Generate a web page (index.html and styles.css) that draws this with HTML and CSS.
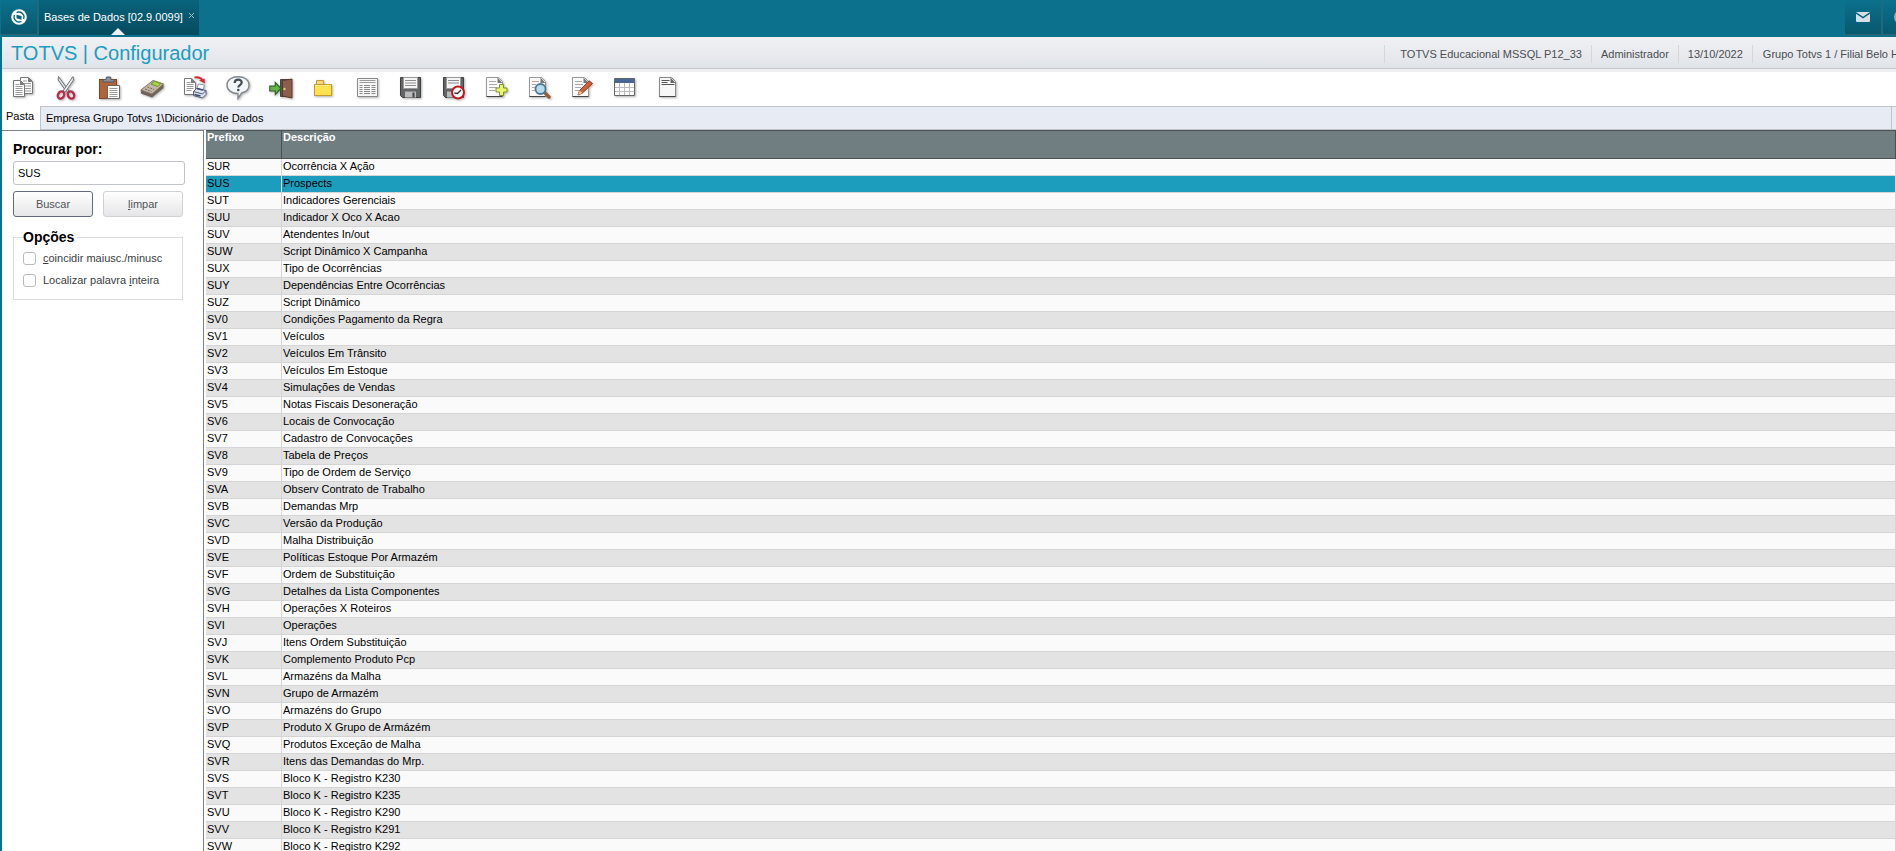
FILE: index.html
```html
<!DOCTYPE html>
<html lang="pt-BR">
<head>
  <meta charset="UTF-8">
  <title>TOTVS | Configurador</title>
  <meta name="viewport" content="width=device-width, initial-scale=1.0">
  <link rel="stylesheet" href="styles.css">
</head>
<body>

  <nav class="topbar">
    <button class="top-btn" aria-label="Menu">
      <svg width="18" height="18" viewBox="0 0 18 18"><circle cx="9" cy="9" r="7.800" fill="#fff"/><path d="M6.500 6.800 11.500 8v3.800l-5-1.600z" fill="#09647c"/><path d="M6.500 4.500q5-2 7.500 3.500l-.3 3M11.500 13.500q-5 2-7.500-3.500l.3-3" fill="none" stroke="#09647c" stroke-width="1.300"/></svg>
    </button>
    <div class="top-tab">
      <span>Bases de Dados [02.9.0099]</span>
      <button class="tab-close" aria-label="Fechar"><svg width="7" height="7" viewBox="0 0 7 7"><path d="M1 1 6 6M6 1 1 6" stroke="#9fc0ca"/></svg></button>
    </div>
    <div class="top-right">
      <button class="top-btn" aria-label="Mensagens">
        <svg width="14" height="10" viewBox="0 0 14 10"><rect width="14" height="10" rx="1" fill="#d5e0e6"/><path d="M0 .8 7 5.600 14 .8" fill="none" stroke="#066179" stroke-width="1.400"/></svg>
      </button>
      <button class="top-btn cut" aria-label="Ajuda">
        <svg width="14" height="14" viewBox="0 0 14 14"><circle cx="7" cy="7" r="7" fill="#8fb2bf"/></svg>
      </button>
    </div>
  </nav>

  <div class="app">
    <header class="app-header">
      <h1>TOTVS | Configurador</h1>
      <ul class="session">
        <li>TOTVS Educacional MSSQL P12_33</li>
        <li>Administrador</li>
        <li>13/10/2022</li>
        <li class="branch">Grupo Totvs 1 / Filial Belo H</li>
      </ul>
    </header>

    <div class="toolbar">
      <button aria-label="Copiar">
        <svg viewBox="0 0 24 24"><path d="M9.500 1.500h8l4 4v12h-12z" fill="#fff" stroke="#777"/><path d="M17 1.500v4.500h4.500z" fill="#777"/><path d="M12 5h4M12 7.500h8M12 10h8M12 12.500h8M12 15h8" stroke="#999"/><path d="M2.500 4.500h7l4 4v12h-11z" fill="#fff" stroke="#777"/><path d="M9 4.500v4.500h4.500z" fill="#777"/><path d="M4.500 8.500h4M4.500 10.500h7M4.500 12.500h7M4.500 14.500h7M4.500 16.500h7M4.500 18.500h7" stroke="#999"/></svg>
      </button>
      <button aria-label="Recortar">
        <svg viewBox="0 0 24 24"><path d="M4.500.5 15 15l-2 1.500L4.200 4z" fill="#d8dde0" stroke="#707478"/><path d="M19 .5 9 15l2 1.500 8.500-12.500z" fill="#eceff0" stroke="#707478"/><ellipse cx="7" cy="19" rx="3" ry="3.800" fill="none" stroke="#b5304a" stroke-width="2.400" transform="rotate(28 7 19)"/><ellipse cx="17" cy="19" rx="3" ry="3.800" fill="none" stroke="#b5304a" stroke-width="2.400" transform="rotate(-28 17 19)"/></svg>
      </button>
      <button aria-label="Colar">
        <svg viewBox="0 0 24 24"><rect x="2.500" y="3.500" width="17" height="19" fill="#b16437" stroke="#87451f"/><path d="M6 6V3.500h3L9.500 1h4l.5 2.500h3V6z" fill="#8c9096" stroke="#55595e"/><path d="M10.500 9.500h12v13h-12z" fill="#fff" stroke="#666"/><path d="M12.500 12.500h8M12.500 14.500h8M12.500 16.500h8M12.500 18.500h8M12.500 20.500h8" stroke="#999"/></svg>
      </button>
      <button aria-label="Calculadora">
        <svg viewBox="0 0 24 24"><path d="M.8 14v3.500L12 21.500 23.500 12V8z" fill="#6f6259"/><path d="M.8 14 13 4.500 23.500 8 12 18z" fill="#c4b4a4" stroke="#85776b"/><path d="M11 8 14.500 5.300l6.500 2.200-3.500 3z" fill="#a5d83c" stroke="#6f943a"/><path d="m5 13 6.500 2.500M7.500 11l6.500 2.500" stroke="#75675c" stroke-dasharray="2 1"/></svg>
      </button>
      <button aria-label="Imprimir">
        <svg viewBox="0 0 24 24"><path d="M1.500 2.500h7l4 4v12h-11z" fill="#fff" stroke="#777"/><path d="M8 2.500v4.500h4.500z" fill="#777"/><path d="M3.500 6.500h4M3.500 8.500h7M3.500 10.500h7M3.500 12.500h7M3.500 14.500h5" stroke="#999"/><path d="M11.500 1.500q6-1 8 3" fill="none" stroke="#d62b36" stroke-width="2"/><path d="m16 4.500 5.500-2 .5 5z" fill="#d62b36"/><path d="m13.500 13 2-5 6 1-1.500 5z" fill="#fff" stroke="#8c96ad"/><path d="m10.500 15.500 3-3 9.500 2v4l-3.500 3.500-9-2.500z" fill="#dce3f4" stroke="#555d70"/><path d="m10.500 15.500 9 2.500 3.500-3.500" fill="none" stroke="#555d70"/><path d="m14 12.500 6 1.500M11.500 18.500l6 1.500" stroke="#3c4a79" stroke-width="1.500"/></svg>
      </button>
      <button aria-label="Ajuda">
        <svg viewBox="0 0 24 24"><path d="M12 .8C18.500.8 23 4 23 9c0 4-3 7-7.500 8L12 22.500v-5C5.500 17.500 1 14 1 9S5.500.8 12 .8z" fill="#f3f6f9" stroke="#808992" stroke-width="1.400"/><path d="M8.700 7c0-4.300 7-4.300 7-.6 0 2.600-3.400 2.600-3.400 5" fill="none" stroke="#454b52" stroke-width="2.200"/><circle cx="12.300" cy="14" r="1.300" fill="#454b52"/></svg>
      </button>
      <button aria-label="Sair">
        <svg viewBox="0 0 24 24"><path d="M11.500 3.500h11v17h-11z" fill="#555" stroke="#444"/><path d="m13.500 4.500 9.500-1.500v19l-9.500-2z" fill="#8c5d4b" stroke="#5c392c"/><circle cx="15.500" cy="13" r="1.200" fill="#e3c48a"/><path d="M.8 10h5.500V6.500L12 12.500l-5.700 6V15H.8z" fill="#65b347" stroke="#2d6424" stroke-width="1.200"/></svg>
      </button>
      <button aria-label="Abrir">
        <svg viewBox="0 0 24 24"><path d="M2.500 19.500v-11h2v-4h7v4h8v11z" fill="#f6d37a" stroke="#c99b38"/><path d="M2.500 8.500h17v11h-17z" fill="#ffe24f" stroke="#c99b26"/><path d="M3.500 9.500h15" stroke="#fff3a0"/></svg>
      </button>
      <button aria-label="Lista">
        <svg viewBox="0 0 24 24"><path d="M2.500 2.500h20v18h-20z" fill="#f6f6f6" stroke="#888"/><path d="M4.500 4.500h16M4.500 6.500h16" stroke="#999"/><path d="M4.500 9.500h3M9 9.500h6M16.500 9.500h4M4.500 11.500h3M9 11.500h6M16.500 11.500h4M4.500 13.500h3M9 13.500h6M16.500 13.500h4M4.500 15.500h3M9 15.500h6M16.500 15.500h4M4.500 17.500h3M9 17.500h6M16.500 17.500h4" stroke="#888"/></svg>
      </button>
      <button aria-label="Salvar">
        <svg viewBox="0 0 24 24"><path d="M2.500 1.500h20v20h-18l-2-2z" fill="#626466" stroke="#3e4042"/><path d="M5.500 1.500h14v11h-14z" fill="#f5f5f5" stroke="#999"/><path d="M7 4.500h11M7 7h11M7 9.500h11" stroke="#8d8d8d"/><path d="M7 15.500h11v6H7z" fill="#b9bbbd"/><path d="M14.500 16.500h2v5h-2z" fill="#444"/></svg>
      </button>
      <button aria-label="Agendar">
        <svg viewBox="0 0 24 24"><path d="M2.500 1.500h20v20h-18l-2-2z" fill="#626466" stroke="#3e4042"/><path d="M5.500 1.500h14v11h-14z" fill="#f5f5f5" stroke="#999"/><path d="M7 4.500h11M7 7h11" stroke="#8d8d8d"/><path d="M6 15.500h6v6H6z" fill="#b9bbbd"/><circle cx="17" cy="16.500" r="6" fill="#fff" stroke="#c4171c" stroke-width="2"/><path d="m13.500 17 3 .5 3.500-3.500" fill="none" stroke="#333" stroke-width="1.400"/></svg>
      </button>
      <button aria-label="Incluir">
        <svg viewBox="0 0 24 24"><path d="M2.500 1.500h12l4 4v15h-16z" fill="#fafafa" stroke="#999"/><path d="M2.500 20.500h16" stroke="#444"/><path d="M13.500 1.500v5.500h5z" fill="#777"/><path d="M5 5.500h7M5 8.500h8M5 11.500h8M5 14.500h6" stroke="#aaa"/><path d="M15.500 8.500h4v3.500h3.500v4h-3.500v3.500h-4v-3.500H12v-4h3.500z" fill="#e9f86b" stroke="#7d9028"/></svg>
      </button>
      <button aria-label="Visualizar">
        <svg viewBox="0 0 24 24"><path d="M2.500 1.500h12l4 4v15h-16z" fill="#fafafa" stroke="#999"/><path d="M2.500 20.500h16" stroke="#444"/><path d="M13.500 1.500v5.500h5z" fill="#777"/><path d="M5 5.500h7M5 8.500h4M5 11.500h3M5 14.500h4" stroke="#aaa"/><path d="m17 16 5 5" stroke="#94603c" stroke-width="3.500" stroke-linecap="round"/><circle cx="13.500" cy="13" r="5" fill="#b7dcef" stroke="#4d7894" stroke-width="1.800"/></svg>
      </button>
      <button aria-label="Alterar">
        <svg viewBox="0 0 24 24"><path d="M2.500 1.500h12l4 4v15h-16z" fill="#fafafa" stroke="#999"/><path d="M2.500 20.500h16" stroke="#444"/><path d="M13.500 1.500v5.500h5z" fill="#777"/><path d="M5 5.500h7M5 8.500h8M5 11.500h6M5 14.500h4" stroke="#aaa"/><path d="m8 19 1.500-4.500L19 4.800l3.500 2.700-10 9.500z" fill="#cf6236" stroke="#8c3b22"/><path d="m8 19 1.500-4.500 3 2.500z" fill="#e9c893"/></svg>
      </button>
      <button aria-label="Tabela">
        <svg viewBox="0 0 24 24"><path d="M1.500 2.500h20v17h-20z" fill="#fff" stroke="#666"/><path d="M2 3h19v4H2z" fill="#486793"/><path d="M2 11.500h19M2 15.500h19M6.500 7v12M11.500 7v12M16.500 7v12" stroke="#bbb"/></svg>
      </button>
      <button aria-label="Documento">
        <svg viewBox="0 0 24 24"><path d="M3.500 1.500h12l4 4v15h-16z" fill="#f7f7f7" stroke="#888"/><path d="M3.500 20.500h16" stroke="#444"/><path d="M14.500 1.500v5.500h5z" fill="#666"/><path d="M5.500 4.500h8M5.500 6.500h6M5.500 8.500h13" stroke="#555"/></svg>
      </button>
    </div>

    <div class="folder-bar">
      <div class="folder-tab">Pasta</div>
      <div class="folder-path">Empresa Grupo Totvs 1\Dicionário de Dados</div>
      <div class="folder-end"></div>
    </div>

    <div class="content">
      <form class="search-panel">
        <label class="search-title" for="search">Procurar por:</label>
        <input type="text" id="search" class="search-input" value="SUS">
        <div class="search-actions">
          <button type="button" class="primary">Buscar</button>
          <button type="button"><u>l</u>impar</button>
        </div>
        <fieldset>
          <legend>Opções</legend>
          <div class="option">
            <input type="checkbox" id="matchCase">
            <label for="matchCase"><u>c</u>oincidir maiusc./minusc</label>
          </div>
          <div class="option">
            <input type="checkbox" id="wholeWord">
            <label for="wholeWord">Localizar palavra <u>i</u>nteira</label>
          </div>
        </fieldset>
      </form>

      <div class="grid">
        <table>
          <thead>
            <tr><th class="prefix">Prefixo</th><th>Descrição</th></tr>
          </thead>
          <tbody>
            <tr><td>SUR</td><td>Ocorrência X Ação</td></tr>
            <tr class="selected"><td>SUS</td><td>Prospects</td></tr>
            <tr><td>SUT</td><td>Indicadores Gerenciais</td></tr>
            <tr><td>SUU</td><td>Indicador X Oco X Acao</td></tr>
            <tr><td>SUV</td><td>Atendentes In/out</td></tr>
            <tr><td>SUW</td><td>Script Dinâmico X Campanha</td></tr>
            <tr><td>SUX</td><td>Tipo de Ocorrências</td></tr>
            <tr><td>SUY</td><td>Dependências Entre Ocorrências</td></tr>
            <tr><td>SUZ</td><td>Script Dinâmico</td></tr>
            <tr><td>SV0</td><td>Condições Pagamento da Regra</td></tr>
            <tr><td>SV1</td><td>Veículos</td></tr>
            <tr><td>SV2</td><td>Veículos Em Trânsito</td></tr>
            <tr><td>SV3</td><td>Veículos Em Estoque</td></tr>
            <tr><td>SV4</td><td>Simulações de Vendas</td></tr>
            <tr><td>SV5</td><td>Notas Fiscais Desoneração</td></tr>
            <tr><td>SV6</td><td>Locais de Convocação</td></tr>
            <tr><td>SV7</td><td>Cadastro de Convocações</td></tr>
            <tr><td>SV8</td><td>Tabela de Preços</td></tr>
            <tr><td>SV9</td><td>Tipo de Ordem de Serviço</td></tr>
            <tr><td>SVA</td><td>Observ Contrato de Trabalho</td></tr>
            <tr><td>SVB</td><td>Demandas Mrp</td></tr>
            <tr><td>SVC</td><td>Versão da Produção</td></tr>
            <tr><td>SVD</td><td>Malha Distribuição</td></tr>
            <tr><td>SVE</td><td>Políticas Estoque Por Armazém</td></tr>
            <tr><td>SVF</td><td>Ordem de Substituição</td></tr>
            <tr><td>SVG</td><td>Detalhes da Lista Componentes</td></tr>
            <tr><td>SVH</td><td>Operações X Roteiros</td></tr>
            <tr><td>SVI</td><td>Operações</td></tr>
            <tr><td>SVJ</td><td>Itens Ordem Substituição</td></tr>
            <tr><td>SVK</td><td>Complemento Produto Pcp</td></tr>
            <tr><td>SVL</td><td>Armazéns da Malha</td></tr>
            <tr><td>SVN</td><td>Grupo de Armazém</td></tr>
            <tr><td>SVO</td><td>Armazéns do Grupo</td></tr>
            <tr><td>SVP</td><td>Produto X Grupo de Armázém</td></tr>
            <tr><td>SVQ</td><td>Produtos Exceção de Malha</td></tr>
            <tr><td>SVR</td><td>Itens das Demandas do Mrp.</td></tr>
            <tr><td>SVS</td><td>Bloco K - Registro K230</td></tr>
            <tr><td>SVT</td><td>Bloco K - Registro K235</td></tr>
            <tr><td>SVU</td><td>Bloco K - Registro K290</td></tr>
            <tr><td>SVV</td><td>Bloco K - Registro K291</td></tr>
            <tr><td>SVW</td><td>Bloco K - Registro K292</td></tr>
          </tbody>
        </table>
      </div>
    </div>
  </div>

</body>
</html>
```
FILE: styles.css
```css
* {
  box-sizing: border-box;
}

body {
  margin: 0;
  height: 100vh;
  overflow: hidden;
  display: flex;
  flex-direction: column;
  background: #0b718d;
  color: #000;
  font-family: "Liberation Sans", Arial, sans-serif;
  font-size: 11px;
}

button,
input {
  font-family: inherit;
  font-size: 11px;
}

/* top bar */
.topbar {
  display: flex;
  flex: none;
  height: 37px;
  padding-left: 1px;
  padding-bottom: 2px;
}

.top-btn {
  display: flex;
  align-items: center;
  justify-content: center;
  width: 37px;
  padding: 0;
  border: 0;
  border-right: 1px solid #33616d;
  border-bottom: 1px solid #33616d;
  background: linear-gradient(#0b718d, #08586e);
}

.top-tab {
  position: relative;
  display: flex;
  align-items: center;
  gap: 5px;
  margin-left: 1px;
  padding: 0 4px 2px 5px;
  background: linear-gradient(#08647c, #064b5e);
  color: #fff;
  white-space: nowrap;
}

.top-tab::after {
  content: "";
  position: absolute;
  left: 50%;
  bottom: 0;
  margin-left: -8px;
  border: 7px solid transparent;
  border-top: 0;
  border-bottom-color: #eef0f3;
}

.tab-close {
  display: flex;
  padding: 0 0 2px;
  border: 0;
  background: none;
}

.top-right {
  display: flex;
  gap: 1px;
  margin-left: auto;
}

.top-btn.cut {
  width: 13px;
  justify-content: flex-start;
  padding-left: 11px;
  border-right: 0;
  overflow: hidden;
}

.top-btn svg {
  flex: none;
}

/* application header */
.app {
  display: flex;
  flex: 1;
  flex-direction: column;
  min-height: 0;
  margin-left: 2px;
  background: #fff;
}

.app-header {
  display: flex;
  flex: none;
  align-items: center;
  justify-content: space-between;
  height: 32px;
  padding-left: 9px;
  border-bottom: 1px solid #c3c8cd;
  background: linear-gradient(#f1f1f4, #e0e4e9);
}

h1 {
  margin: 0;
  padding-top: 2px;
  color: #1b9dc0;
  font-size: 20px;
  font-weight: normal;
}

.session {
  display: flex;
  margin: 0 -3px 0 0;
  padding: 2px 0 0;
  list-style: none;
  color: #4a4e52;
}

.session li {
  padding: 0 9px;
  border-left: 1px solid #d3d8d8;
  line-height: 18px;
  white-space: nowrap;
}

.session li:first-child {
  padding-left: 15px;
}

.session .branch {
  padding: 0 0 0 10px;
}

/* toolbar */
.toolbar {
  display: flex;
  flex: none;
  height: 37px;
  border-top: 3px solid #f0f0f2;
}

.toolbar button {
  width: 43px;
  padding: 0 2px 2px 0;
  border: 0;
  background: none;
}

.toolbar svg {
  display: block;
  width: 24px;
  height: 24px;
  margin: 0 auto;
  filter: drop-shadow(1px 1px 1px rgba(0,0,0,0.3));
}

/* folder bar */
.folder-bar {
  display: flex;
  flex: none;
  height: 24px;
}

.folder-tab {
  width: 38px;
  padding-left: 4px;
  line-height: 20px;
}

.folder-path {
  flex: 1;
  padding-left: 5px;
  border: 1px solid #c0c4c8;
  background: #e7ebf3;
  line-height: 23px;
}

.folder-end {
  width: 4px;
  border: solid #c0c4c8;
  border-width: 1px 0;
  background: #e7ebf3;
}

/* content */
.content {
  display: flex;
  flex: 1;
  gap: 2px;
  min-height: 0;
}

.search-panel {
  width: 202px;
  flex: none;
  padding: 10px 19px 0 11px;
  border: solid #7b8285;
  border-width: 1px 1px 0 0;
}

.search-title {
  display: block;
  height: 20px;
  font-size: 14px;
  font-weight: bold;
  line-height: 16px;
}

.search-input {
  display: block;
  width: 172px;
  height: 24px;
  padding: 0 4px;
  border: 1px solid #c0c4c8;
  border-radius: 3px;
}

.search-actions {
  display: flex;
  gap: 10px;
  margin-top: 6px;
}

.search-actions button {
  width: 80px;
  height: 26px;
  padding: 0;
  border: 1px solid #d0d3d6;
  border-radius: 3px;
  background: linear-gradient(#fff, #e6e6e8);
  color: #4e5459;
}

.search-actions .primary {
  border-color: #636c7e;
}

fieldset {
  width: 170px;
  height: 73px;
  margin: 10px 0 0;
  padding: 0 9px;
  border: 1px solid #dcdcdc;
}

legend {
  padding: 0 3px 0 0;
  font-size: 14px;
  font-weight: bold;
  line-height: 20px;
}

.option {
  display: flex;
  align-items: center;
  gap: 7px;
  height: 22px;
  color: #3a3e42;
  white-space: nowrap;
}

.option input {
  appearance: none;
  flex: none;
  width: 13px;
  height: 13px;
  margin: 0;
  border: 1px solid #b8bcc0;
  border-radius: 3px;
  background: #fff;
}

.option input:checked {
  background: #1c9dbe;
}

/* grid */
.grid {
  flex: 1;
  min-width: 0;
  overflow: hidden;
}

table {
  width: 100%;
  border-collapse: separate;
  border-spacing: 0;
  table-layout: fixed;
}

th {
  height: 29px;
  padding: 0 1px;
  border: solid #4b5153;
  border-width: 1px 1px 1px 0;
  background: #707e82;
  color: #fff;
  line-height: 13px;
  text-align: left;
  vertical-align: top;
}

.prefix {
  width: 76px;
}

td {
  height: 17px;
  padding: 0 1px 2px;
  border: solid #d5d5d5;
  border-width: 0 1px 1px 0;
  background: #fafafa;
  line-height: 14px;
  white-space: nowrap;
}

tr:nth-child(even) td {
  background: #e3e3e3;
}

tr.selected td {
  background: #1c9dbe;
}
```
